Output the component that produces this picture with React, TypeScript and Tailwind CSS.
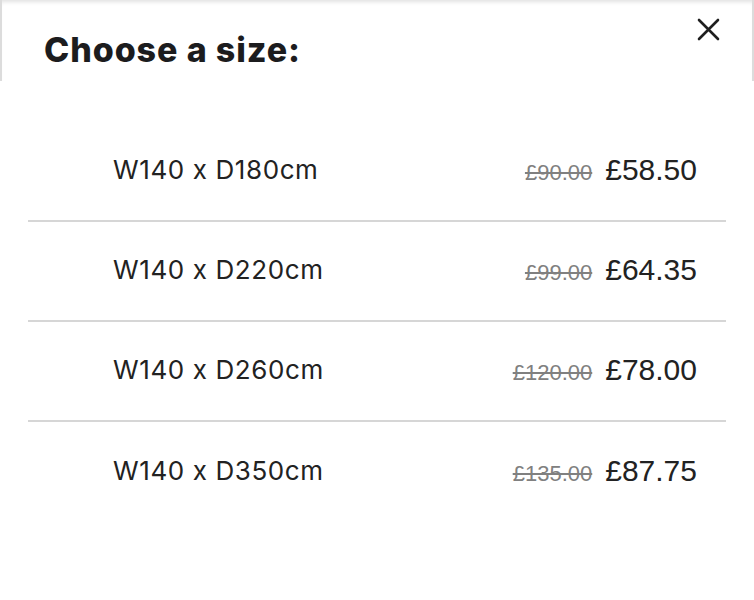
const sizes = [
  { label: 'W140 x D180cm', was: '£90.00', now: '£58.50' },
  { label: 'W140 x D220cm', was: '£99.00', now: '£64.35' },
  { label: 'W140 x D260cm', was: '£120.00', now: '£78.00' },
  { label: 'W140 x D350cm', was: '£135.00', now: '£87.75' },
]

export default function App() {
  return (
    <div className="w-[754px] h-[600px] bg-white overflow-hidden">
      {/* Header */}
      <div className="h-[81px] flex items-start justify-between border-x-2 border-[#dcdcdc] shadow-[inset_0_5px_4px_-3px_rgba(0,0,0,0.12)] pl-[42px] pr-[32px]">
        <h2
          className="mt-[27px] text-[34px] leading-[46px] font-extrabold text-[#1c1c1e] tracking-[0.9px]"
          style={{ fontFamily: 'Inter, "Noto Sans", sans-serif' }}
        >
          Choose a size:
        </h2>
        <button className="mt-[18px] text-[#1f1f1f]" aria-label="Close">
          <svg width="23" height="23" viewBox="0 0 23 23" fill="none" stroke="currentColor" strokeWidth={2.6} strokeLinecap="round">
            <path d="M2 2 L21 21 M21 2 L2 21" />
          </svg>
        </button>
      </div>

      {/* Options */}
      <div className="mt-[41px] px-[28px]">
        {sizes.map((s, i) => (
          <div
            key={s.label}
            className={`h-[100px] flex items-center justify-between pl-[85px] pr-[29px] ${
              i < sizes.length - 1 ? 'border-b-2 border-[#d6d6d6]' : ''
            }`}
          >
            <span
              className="text-[26px] text-[#222] tracking-[0.6px] -mt-[4px]"
              style={{ fontFamily: 'Inter, "Noto Sans", sans-serif' }}
            >
              {s.label}
            </span>
            <span
              className="flex items-baseline gap-[13px] -mt-[4px]"
              style={{ fontFamily: '"Liberation Sans", Arial, sans-serif' }}
            >
              <span className="text-[22px] text-[#808080] line-through">{s.was}</span>
              <span className="text-[30px] text-[#222]">{s.now}</span>
            </span>
          </div>
        ))}
      </div>
    </div>
  )
}
